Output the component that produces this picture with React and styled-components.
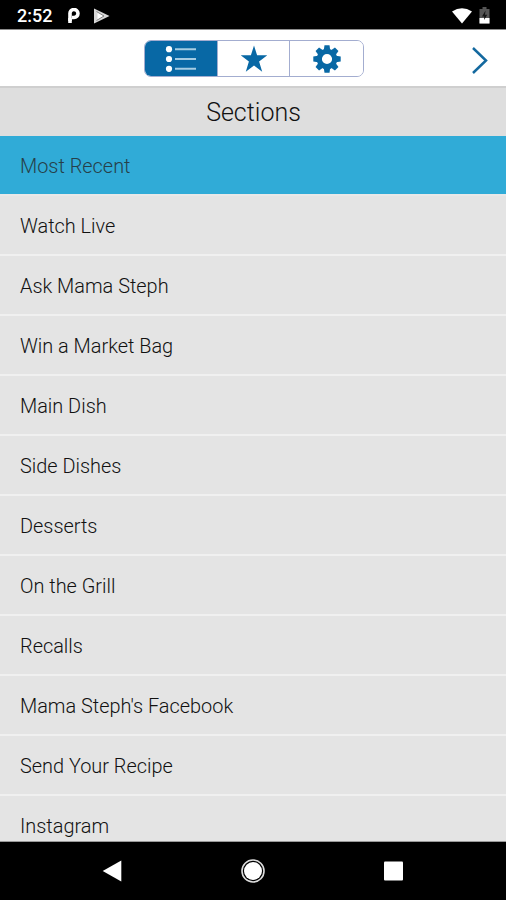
import styled, { createGlobalStyle } from 'styled-components';

const GlobalStyle = createGlobalStyle`
  * {
    box-sizing: border-box;
  }

  body {
    margin: 0;
    background: #000;
    font-family: Roboto, "Liberation Sans", sans-serif;
  }

  svg {
    display: block;
  }
`

const Screen = styled.div`
  width: 506px;
  height: 900px;
  display: flex;
  flex-direction: column;
  overflow: hidden;
  background: #000;
`

const StatusBar = styled.header`
  flex: none;
  height: 30px;
  padding: 2px 16px 0 17px;
  display: flex;
  align-items: center;
  justify-content: space-between;
  border-bottom: 1px solid #8c8c8c;
  color: #fff;
`

const StatusGroup = styled.div`
  display: flex;
  align-items: center;
  gap: ${props => props.$gap};
`

const Clock = styled.span`
  width: 36px;
  font-size: 18px;
  line-height: 20px;
  font-weight: 500;
  white-space: nowrap;
  padding-top: 1px;
`

const Toolbar = styled.nav`
  flex: none;
  height: 58px;
  padding: 10px 18px 8px 144px;
  display: flex;
  align-items: flex-start;
  justify-content: space-between;
  background: #fff;
  border-bottom: 2px solid #cfcfcf;
`

const Segments = styled.div`
  display: grid;
  grid-template-columns: 72px 72px 74px;
  width: 220px;
  height: 37px;
  border: 1px solid #a3add0;
  border-radius: 7px;
  overflow: hidden;
`

const Segment = styled.button`
  display: flex;
  align-items: center;
  justify-content: center;
  padding: 0;
  border: 0;
  border-left: ${props => props.$first ? '0' : '1px solid #a3add0'};
  background: ${props => props.$active ? '#0868a5' : '#fff'};
  color: ${props => props.$active ? '#fff' : '#0868a5'};
`

const Chevron = styled.svg`
  margin-top: 6px;
`

const Title = styled.h1`
  flex: none;
  height: 48px;
  margin: 0;
  padding-left: 1px;
  background: #dedede;
  color: #111;
  font-size: 25px;
  line-height: 49px;
  font-weight: 300;
  text-align: center;
`

const List = styled.ul`
  flex: 1;
  min-height: 0;
  margin: 0;
  padding: 0;
  overflow: hidden;
  list-style: none;
  background: #e4e4e4;
  border-bottom: 1px solid #999;
`

const Row = styled.li`
  height: 60px;
  padding: 1px 20px 0;
  border-bottom: 2px solid ${props => props.$active ? '#e8e8e8' : '#f0f0f0'};
  background: ${props => props.$active ? '#30abd7' : '#e4e4e4'};
  color: ${props => props.$active ? '#263f49' : '#111'};
  font-size: 19.9px;
  line-height: 60px;
  font-weight: 300;
`

const NavBar = styled.footer`
  flex: none;
  height: 58px;
  padding: 0 102px;
  display: flex;
  align-items: center;
  justify-content: space-between;
`

const sections = [
  'Most Recent',
  'Watch Live',
  'Ask Mama Steph',
  'Win a Market Bag',
  'Main Dish',
  'Side Dishes',
  'Desserts',
  'On the Grill',
  'Recalls',
  "Mama Steph's Facebook",
  'Send Your Recipe',
  'Instagram',
]

const teeth = [0, 45, 90, 135, 180, 225, 270, 315]

const PIcon = () => (
  <svg width="13" height="16" viewBox="0 0 13 16">
    <path d="M3 13V6A4 4 0 1 1 7 9.5H5" fill="none" stroke="#fff" strokeWidth="3.6" />
    <path d="M1.2 10H4.8V15H1.2Z" fill="#fff" />
  </svg>
)

const PlayIcon = () => (
  <svg width="16" height="16" viewBox="0 0 16 16">
    <path d="M0 0.5L15.5 8L0 15.5Z" fill="#d8d8d8" />
    <path d="M3.5 4L9.5 8L3.5 12Z" fill="#fff" />
    <path d="M2.5 3.5L10 8L2.5 12.5" fill="none" stroke="#777" strokeWidth="0.9" />
  </svg>
)

const WifiIcon = () => (
  <svg width="20" height="16" viewBox="0 0 20 16">
    <path d="M0 3.4Q10-3 20 3.4L10 15.6Z" fill="#fff" />
  </svg>
)

const BatteryIcon = () => (
  <svg width="11" height="17" viewBox="0 0 11 17">
    <path d="M3.5 0H7.5V2H10.5V16.5H0.5V2H3.5Z" fill="#555" />
    <path d="M0.5 11H10.5V16.5H0.5Z" fill="#fff" />
    <path d="M6.5 3.5L3 9.5H5.2V13L8.2 7.8H6Z" fill="#151515" />
  </svg>
)

const ListIcon = () => (
  <svg width="32" height="28" viewBox="0 0 32 28">
    {[4.2, 14, 23.8].map(y => (
      <g key={y}>
        <circle cx="4" cy={y} r="3.1" fill="#fff" />
        <path d={`M10 ${y}H31`} stroke="#a5cce3" strokeWidth="2" />
      </g>
    ))}
  </svg>
)

const StarIcon = () => (
  <svg width="28" height="28" viewBox="0 0 28 28">
    <path d="M14 0.5L17.1 10.3H27.3L19.1 16.5L22.2 26.8L14 20.6L5.8 26.8L8.9 16.5L0.7 10.3H10.9Z" fill="currentColor" />
  </svg>
)

const GearIcon = () => (
  <svg width="28" height="28" viewBox="-14 -14 28 28">
    <circle r="7.7" fill="none" stroke="currentColor" strokeWidth="5.2" />
    {teeth.map(angle => (
      <path key={angle} d="M-3.2-9L-2.5-13.7H2.5L3.2-9Z" fill="currentColor" transform={`rotate(${angle})`} />
    ))}
  </svg>
)

const App = () => {
  return (
    <>
      <GlobalStyle />
      <Screen>
        <StatusBar>
          <StatusGroup $gap="14px">
            <Clock>2:52</Clock>
            <PIcon />
            <PlayIcon />
          </StatusGroup>
          <StatusGroup $gap="7px">
            <WifiIcon />
            <BatteryIcon />
          </StatusGroup>
        </StatusBar>
        <Toolbar>
          <Segments>
            <Segment $first $active aria-label="Sections"><ListIcon /></Segment>
            <Segment aria-label="Favorites"><StarIcon /></Segment>
            <Segment aria-label="Settings"><GearIcon /></Segment>
          </Segments>
          <Chevron width="17" height="28" viewBox="0 0 17 28">
            <path d="M2 2L15 14.5L2 27" fill="none" stroke="#14699f" strokeWidth="2.5" />
          </Chevron>
        </Toolbar>
        <Title>Sections</Title>
        <List>
          {sections.map((name, i) => (
            <Row key={name} $active={i === 0}>{name}</Row>
          ))}
        </List>
        <NavBar>
          <svg width="20" height="22" viewBox="0 0 20 22">
            <path d="M0.7 11L19.3 0.5V21.5Z" fill="#fff" />
          </svg>
          <svg width="24" height="24" viewBox="0 0 24 24">
            <circle cx="12" cy="12" r="11" fill="none" stroke="#ddd" strokeWidth="1.6" />
            <circle cx="12" cy="12" r="9" fill="#fff" />
          </svg>
          <svg width="20" height="20" viewBox="0 0 20 20">
            <rect x="0" y="0.5" width="19" height="19" rx="1" fill="#fff" />
          </svg>
        </NavBar>
      </Screen>
    </>
  );
}

export default App;
